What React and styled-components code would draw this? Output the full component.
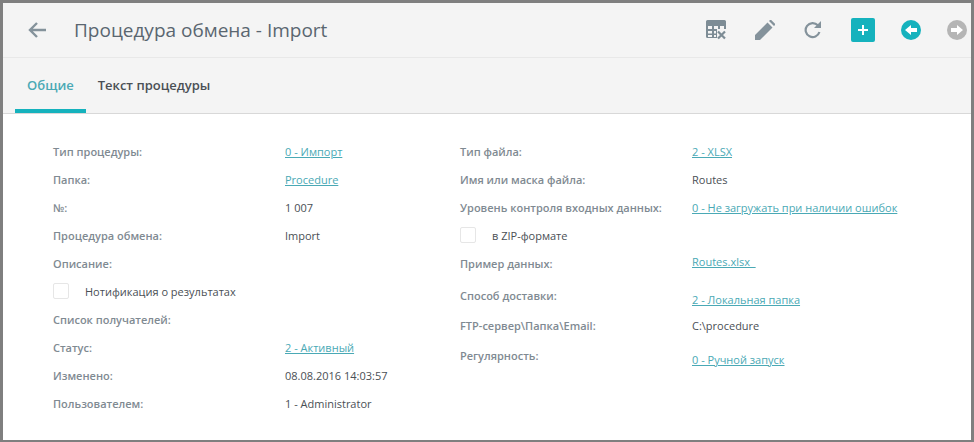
import styled, { createGlobalStyle } from 'styled-components';

const Global = createGlobalStyle`
  html, body { margin: 0; padding: 0; background: #7f7f7f; }
  body { font-family: "Open Sans", "Noto Sans", sans-serif; }
`;

const leftRows = [
  { label: 'Тип процедуры:', link: '0 - Импорт' },
  { label: 'Папка:', link: 'Procedure' },
  { label: '№:', value: '1 007' },
  { label: 'Процедура обмена:', value: 'Import' },
  { label: 'Описание:' },
  { check: 'Нотификация о результатах' },
  { label: 'Список получателей:' },
  { label: 'Статус:', link: '2 - Активный' },
  { label: 'Изменено:', value: '08.08.2016 14:03:57' },
  { label: 'Пользователем:', value: '1 - Administrator' },
];

const rightRows = [
  { label: 'Тип файла:', link: '2 - XLSX' },
  { label: 'Имя или маска файла:', value: 'Routes' },
  { label: 'Уровень контроля входных данных:', link: '0 - Не загружать при наличии ошибок' },
  { check: 'в ZIP-формате' },
  { label: 'Пример данных:', link: 'Routes.xlsx\u00a0\u00a0', height: 28, shift: -2 },
  { label: 'Способ доставки:', link: '2 - Локальная папка', height: 36, shift: 4 },
  { label: 'FTP-сервер\\Папка\\Email:', value: 'C:\\procedure', height: 24 },
  { label: 'Регулярность:', link: '0 - Ручной запуск', height: 36, shift: 4 },
];

const Field = ({ row }) => {
  if (row.check) {
    return (
      <Row>
        <Check />
        <CheckLabel>{row.check}</CheckLabel>
      </Row>
    );
  }
  return (
    <Row $height={row.height}>
      <Label>{row.label}</Label>
      {row.link && <ValueLink href="#" $shift={row.shift}>{row.link}</ValueLink>}
      {row.value && <Value>{row.value}</Value>}
    </Row>
  );
};

const App = () => (
  <>
    <Global />
    <Frame>
      <Header>
        <BackButton>
          <svg width="20" height="18" viewBox="0 0 20 18" fill="none" stroke="#84929b" strokeWidth="2.4">
            <path d="M19 9H3M10 2 3 9l7 7" />
          </svg>
        </BackButton>
        <Title>Процедура обмена - Import</Title>
        <Toolbar>
          <ToolIcon $width={20}>
            <svg width="20" height="20" viewBox="0 0 20 20">
              <path fill="#7d8c95" d="M0 1.5A1.5 1.5 0 0 1 1.5 0h17A1.5 1.5 0 0 1 20 1.5V9h-9v9H1.5A1.5 1.5 0 0 1 0 16.5z" />
              <path fill="#f4f4f4" d="M2 6h4v3H2zM8 6h4v3H8zM14 6h4v3h-4zM2 11h4v2.5H2zM2 15h4v2H2zM8 11h2v2.5H8zM8 15h2v2H8z" />
              <path stroke="#7d8c95" strokeWidth="2.2" d="m12 11.5 7 7M19 11.5l-7 7" />
            </svg>
          </ToolIcon>
          <ToolIcon $width={20}>
            <svg width="20" height="20" viewBox="0 0 20 20">
              <path fill="#84929b" d="M0 20v-5L12.5 2.5l5 5L5 20zM14 1l1-1q.6-.5 1.2 0l3.8 3.8q.5.6 0 1.2l-1 1z" />
            </svg>
          </ToolIcon>
          <ToolIcon $width={18}>
            <svg width="18" height="18" viewBox="0 0 18 18" fill="none">
              <path stroke="#84929b" strokeWidth="2.2" d="M15.4 11a7 7 0 1 1-1.6-6.7" />
              <path fill="#84929b" d="M17 0v7h-7z" />
            </svg>
          </ToolIcon>
          <AddButton>
            <svg width="12" height="12" viewBox="0 0 12 12">
              <path stroke="#fff" strokeWidth="2" d="M6 1v10M1 6h10" />
            </svg>
          </AddButton>
          <RoundButton $color="#15b2bd">
            <svg width="12" height="10" viewBox="0 0 12 10">
              <path fill="#fff" d="M0 5 6 0v3h6v4H6v3z" />
            </svg>
          </RoundButton>
          <RoundButton $color="#b5b5b5">
            <svg width="12" height="10" viewBox="0 0 12 10">
              <path fill="#fff" d="M12 5 6 0v3H0v4h6v3z" />
            </svg>
          </RoundButton>
        </Toolbar>
      </Header>
      <Tabs>
        <Tab $active>Общие</Tab>
        <Tab>Текст процедуры</Tab>
      </Tabs>
      <Body>
        <Column>
          {leftRows.map((row, i) => <Field key={i} row={row} />)}
        </Column>
        <Column>
          {rightRows.map((row, i) => <Field key={i} row={row} />)}
        </Column>
      </Body>
    </Frame>
  </>
);

export default App;

const Frame = styled('div')`
  box-sizing: border-box;
  width: 974px;
  height: 442px;
  border-style: solid;
  border-color: #7f7f7f;
  border-width: 3px 3px 2px 3px;
  background: #fff;
  overflow: hidden;
`;

const Header = styled('div')`
  display: flex;
  align-items: center;
  height: 54px;
  padding-left: 24px;
  padding-right: 4px;
  background: #f4f4f4;
  border-bottom: 1px solid #e8e8e8;
`;

const BackButton = styled('div')`
  display: flex;
  width: 47px;
`;

const Title = styled('div')`
  font-size: 19px;
  color: #5a6670;
`;

const Toolbar = styled('div')`
  display: flex;
  align-items: center;
  gap: 29px;
  margin-left: auto;
`;

const ToolIcon = styled('div')`
  display: flex;
  justify-content: center;
  width: ${(p) => p.$width}px;
`;

const AddButton = styled('div')`
  display: flex;
  align-items: center;
  justify-content: center;
  width: 24px;
  height: 24px;
  border-radius: 2px;
  background: #15b2bd;
`;

const RoundButton = styled('div')`
  display: flex;
  align-items: center;
  justify-content: center;
  width: 20px;
  height: 20px;
  border-radius: 50%;
  background: ${(p) => p.$color};
  margin-left: -3px;
`;

const Tabs = styled('div')`
  display: flex;
  height: 55px;
  padding-left: 12px;
  background: #f4f4f4;
  border-bottom: 1px solid #d8d8d8;
`;

const Tab = styled('div')`
  box-sizing: border-box;
  display: flex;
  align-items: center;
  height: 55px;
  padding: 2px 12px 0;
  font-size: 13px;
  font-weight: 600;
  color: ${(p) => (p.$active ? '#4aa9b5' : '#4a4f55')};
  border-bottom: 4px solid ${(p) => (p.$active ? '#15b2bd' : 'transparent')};
`;

const Body = styled('div')`
  display: grid;
  grid-template-columns: 407px 1fr;
  padding: 23px 0 0 50px;
`;

const Column = styled('div')`
  display: flex;
  flex-direction: column;
`;

const Row = styled('div')`
  display: flex;
  align-items: center;
  height: ${(p) => p.$height || 28}px;
  font-size: 11px;
`;

const Label = styled('div')`
  width: 232px;
  flex: none;
  font-weight: 600;
  color: #7f8a92;
`;

const Value = styled('div')`
  color: #4a4f55;
`;

const ValueLink = styled('a')`
  position: relative;
  top: ${(p) => p.$shift || 0}px;
  color: #4aa9b5;
  text-decoration: underline;
  white-space: pre;
`;

const Check = styled('div')`
  box-sizing: border-box;
  width: 16px;
  height: 16px;
  flex: none;
  border: 1px solid #e6e6e6;
  border-radius: 2px;
  background: #fff;
`;

const CheckLabel = styled('div')`
  margin-left: 16px;
  color: #4a4f55;
`;
